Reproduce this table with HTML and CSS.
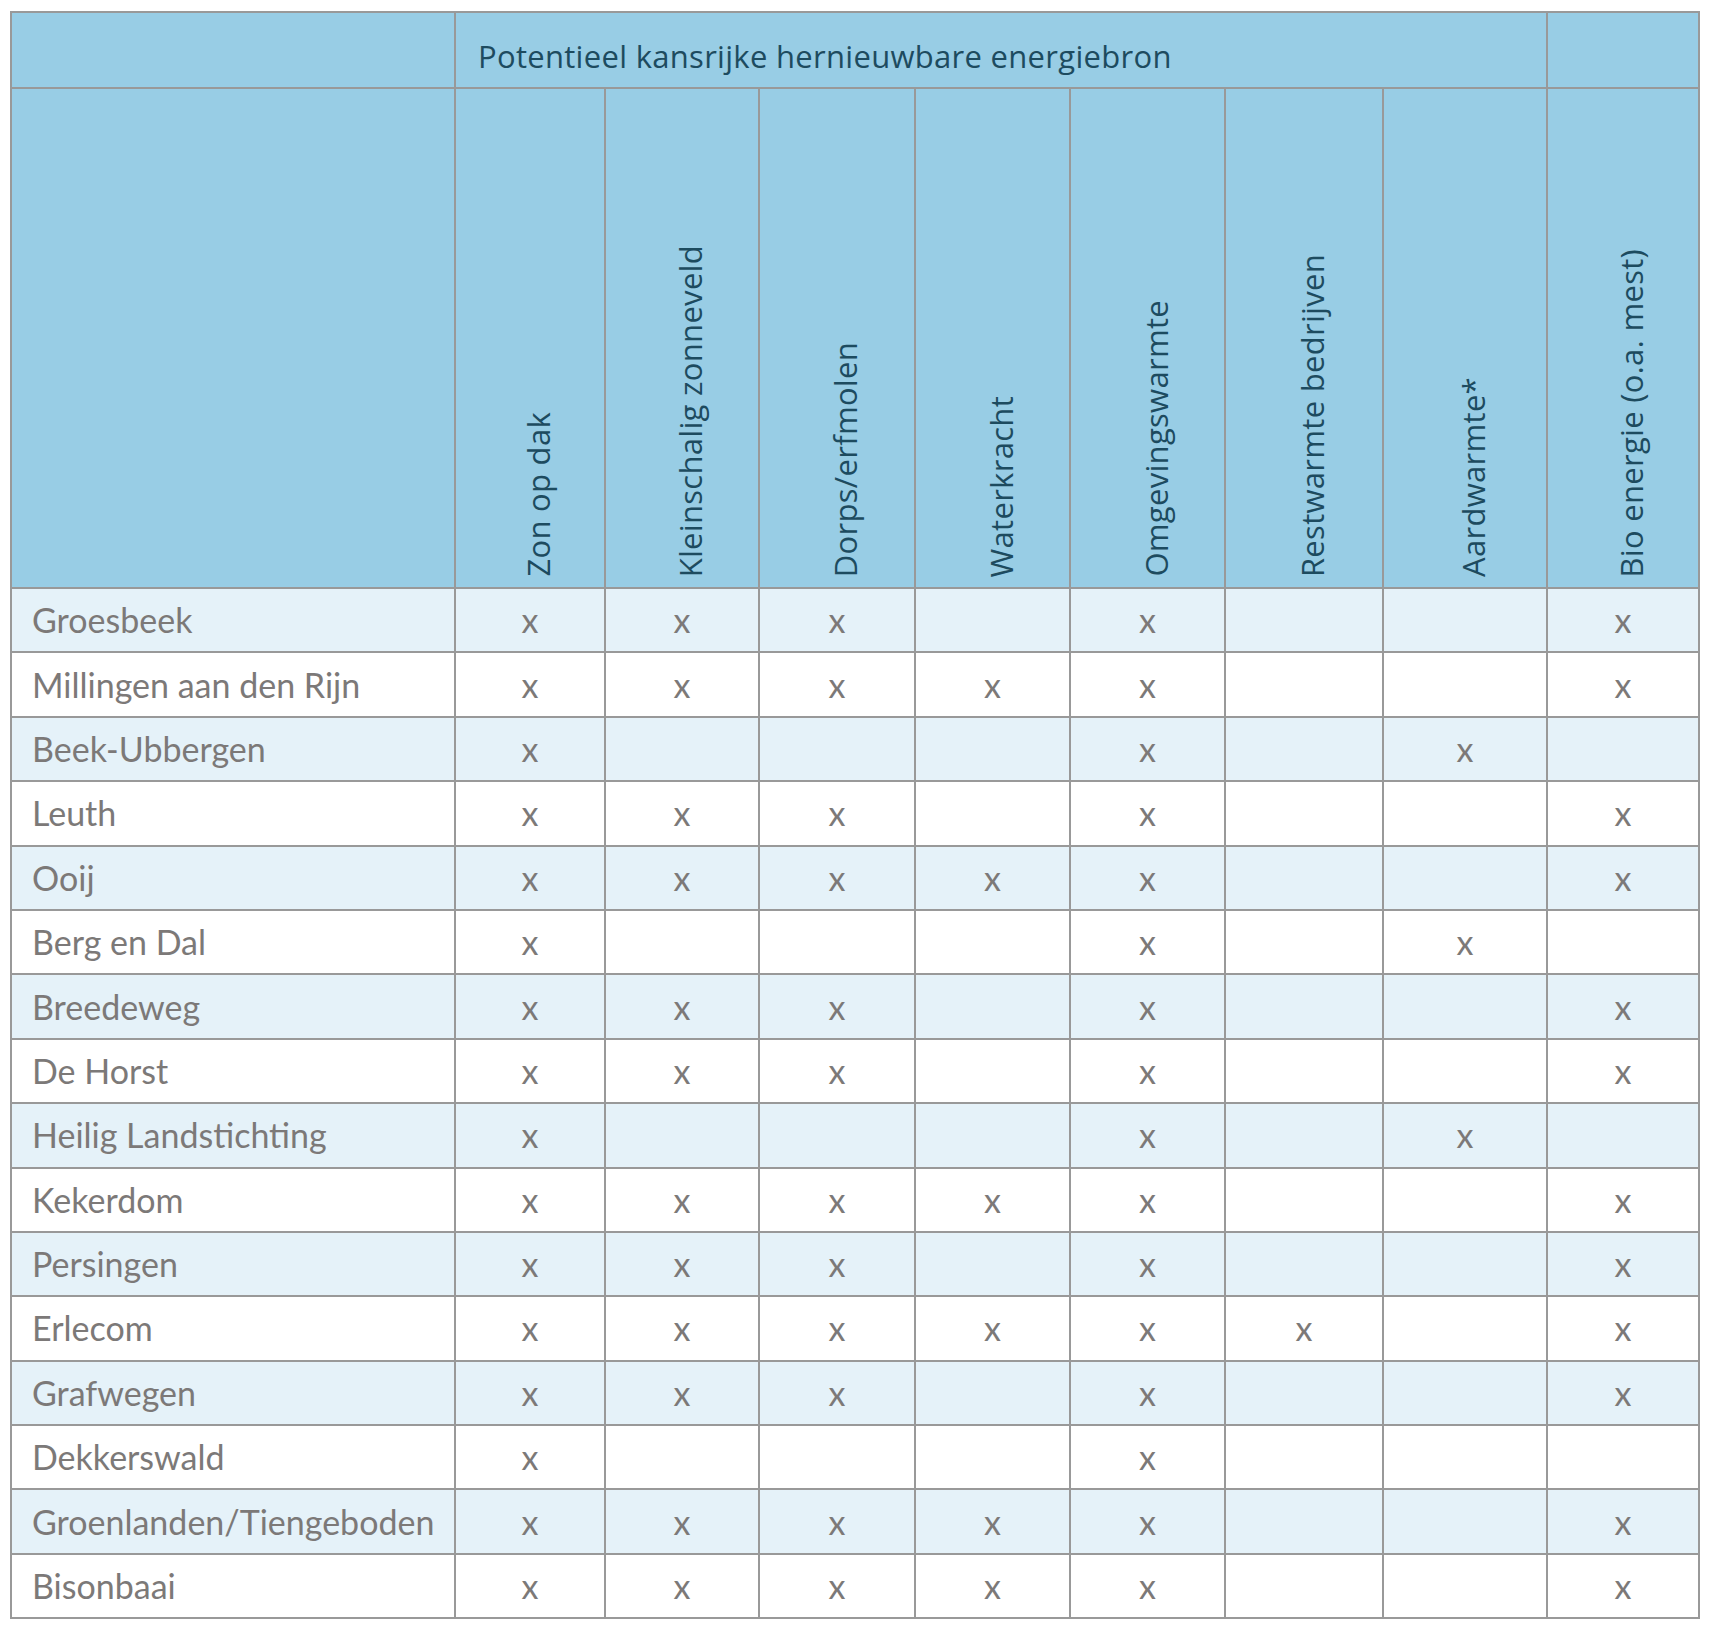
FILE: index.html
```html
<!DOCTYPE html>
<html lang="nl">
<head>
<meta charset="utf-8">
<title>Potentieel kansrijke hernieuwbare energiebron</title>
<link rel="stylesheet" href="styles.css">
</head>
<body>
<table class="energy">
  <colgroup>
    <col class="c-name">
    <col class="c1"><col class="c2"><col class="c3"><col class="c4">
    <col class="c5"><col class="c6"><col class="c7"><col class="c8">
  </colgroup>
  <thead>
    <tr class="head-top">
      <th></th>
      <th class="title" colspan="7">Potentieel kansrijke hernieuwbare energiebron</th>
      <th></th>
    </tr>
    <tr class="head-cols">
      <th></th>
      <th><div class="vwrap"><span class="vtext">Zon op dak</span></div></th>
      <th><div class="vwrap"><span class="vtext">Kleinschalig zonneveld</span></div></th>
      <th><div class="vwrap"><span class="vtext">Dorps/erfmolen</span></div></th>
      <th><div class="vwrap"><span class="vtext">Waterkracht</span></div></th>
      <th><div class="vwrap"><span class="vtext">Omgevingswarmte</span></div></th>
      <th><div class="vwrap"><span class="vtext">Restwarmte bedrijven</span></div></th>
      <th><div class="vwrap"><span class="vtext">Aardwarmte*</span></div></th>
      <th><div class="vwrap"><span class="vtext">Bio energie (o.a. mest)</span></div></th>
    </tr>
  </thead>
  <tbody>
    <tr><td class="name">Groesbeek</td><td>x</td><td>x</td><td>x</td><td></td><td>x</td><td></td><td></td><td>x</td></tr>
    <tr><td class="name">Millingen aan den Rijn</td><td>x</td><td>x</td><td>x</td><td>x</td><td>x</td><td></td><td></td><td>x</td></tr>
    <tr><td class="name">Beek-Ubbergen</td><td>x</td><td></td><td></td><td></td><td>x</td><td></td><td>x</td><td></td></tr>
    <tr><td class="name">Leuth</td><td>x</td><td>x</td><td>x</td><td></td><td>x</td><td></td><td></td><td>x</td></tr>
    <tr><td class="name">Ooij</td><td>x</td><td>x</td><td>x</td><td>x</td><td>x</td><td></td><td></td><td>x</td></tr>
    <tr><td class="name">Berg en Dal</td><td>x</td><td></td><td></td><td></td><td>x</td><td></td><td>x</td><td></td></tr>
    <tr><td class="name">Breedeweg</td><td>x</td><td>x</td><td>x</td><td></td><td>x</td><td></td><td></td><td>x</td></tr>
    <tr><td class="name">De Horst</td><td>x</td><td>x</td><td>x</td><td></td><td>x</td><td></td><td></td><td>x</td></tr>
    <tr><td class="name">Heilig Landstichting</td><td>x</td><td></td><td></td><td></td><td>x</td><td></td><td>x</td><td></td></tr>
    <tr><td class="name">Kekerdom</td><td>x</td><td>x</td><td>x</td><td>x</td><td>x</td><td></td><td></td><td>x</td></tr>
    <tr><td class="name">Persingen</td><td>x</td><td>x</td><td>x</td><td></td><td>x</td><td></td><td></td><td>x</td></tr>
    <tr><td class="name">Erlecom</td><td>x</td><td>x</td><td>x</td><td>x</td><td>x</td><td>x</td><td></td><td>x</td></tr>
    <tr><td class="name">Grafwegen</td><td>x</td><td>x</td><td>x</td><td></td><td>x</td><td></td><td></td><td>x</td></tr>
    <tr><td class="name">Dekkerswald</td><td>x</td><td></td><td></td><td></td><td>x</td><td></td><td></td><td></td></tr>
    <tr><td class="name">Groenlanden/Tiengeboden</td><td>x</td><td>x</td><td>x</td><td>x</td><td>x</td><td></td><td></td><td>x</td></tr>
    <tr><td class="name">Bisonbaai</td><td>x</td><td>x</td><td>x</td><td>x</td><td>x</td><td></td><td></td><td>x</td></tr>
  </tbody>
</table>
</body>
</html>
```

FILE: styles.css
```css
html, body {
  background: #ffffff;
}

body {
  margin: 0;
  padding: 11px 0 0 10px;
}

.energy {
  border-collapse: collapse;
  table-layout: fixed;
  width: 1690px;
  border: 2px solid #a9a9a9;
}

.c-name { width: 444px; }
.c1 { width: 150px; }
.c2 { width: 154px; }
.c3 { width: 156px; }
.c4 { width: 155px; }
.c5 { width: 155px; }
.c6 { width: 158px; }
.c7 { width: 164px; }
.c8 { width: 152px; }

.energy th,
.energy td {
  border: 2px solid #999999;
  padding: 0;
}

.energy thead th {
  background: #98cde5;
  color: #1d4b5f;
  font-family: "Open Sans", "Noto Sans", sans-serif;
  font-weight: 500;
  font-size: 31px;
  letter-spacing: 0.3px;
}

.head-top {
  height: 76px;
}

.head-top .title {
  text-align: left;
  padding: 12px 0 0 22px;
  line-height: 1;
}

.head-cols {
  height: 500px;
}

.vwrap {
  height: 488px;
  display: flex;
  justify-content: center;
  align-items: flex-end;
  padding: 0 0 10px 16px;
  box-sizing: content-box;
}

.vtext {
  writing-mode: vertical-rl;
  transform: rotate(180deg);
  white-space: nowrap;
  line-height: normal;
}

.energy tbody tr {
  height: 64.4px;
}

.energy tbody tr:nth-child(odd) td {
  background: #e5f2f9;
}

.energy tbody td {
  font-family: "Lato", "Liberation Sans", sans-serif;
  font-size: 34px;
  color: #7c7978;
  text-align: center;
  vertical-align: middle;
  line-height: 1;
}

.energy tbody td.name {
  text-align: left;
  padding-left: 20px;
}
```
